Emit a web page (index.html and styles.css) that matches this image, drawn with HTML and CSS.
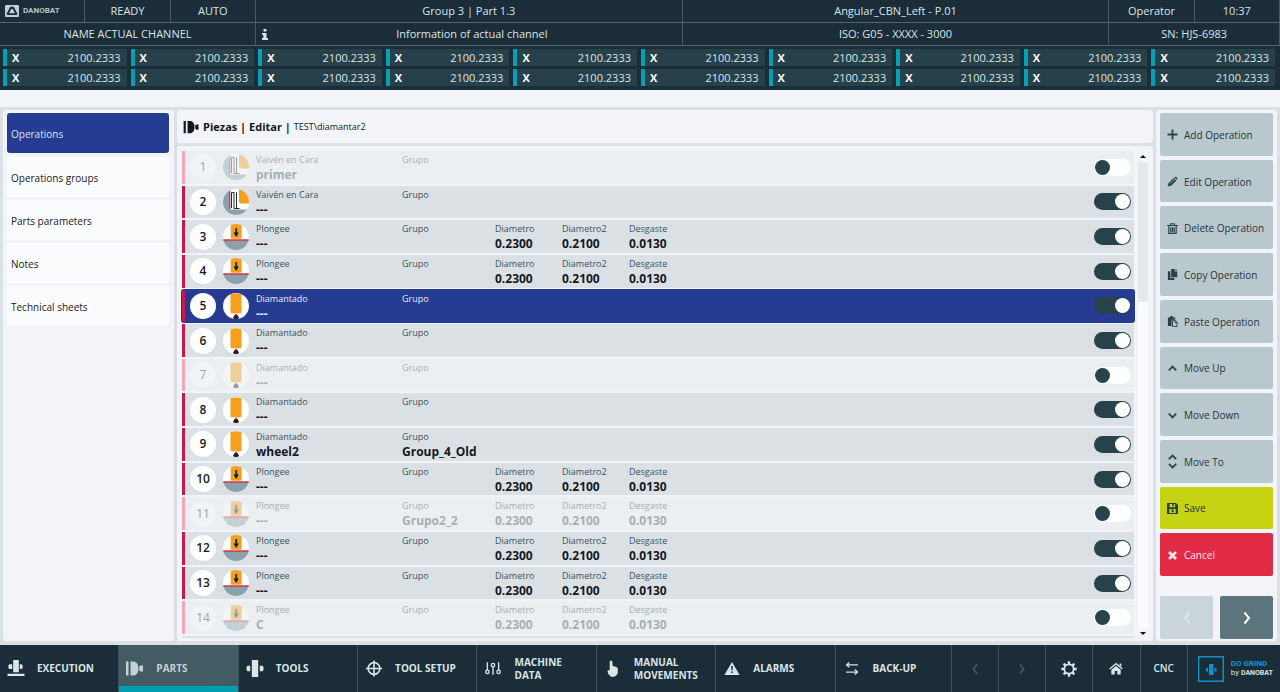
FILE: index.html
```html
<!DOCTYPE html>
<html lang="es">
<head>
<meta charset="utf-8">
<title>Danobat - Piezas | Editar</title>
<link rel="stylesheet" href="styles.css">
</head>
<body>
<svg class="sprite" aria-hidden="true">
  <symbol id="vaiven" viewBox="0 0 26 26">
    <clipPath id="disc"><circle cx="13" cy="13" r="13"/></clipPath>
    <g clip-path="url(#disc)">
      <path fill="#fff" d="M0 0h26v26H0z"/>
      <path fill="#8aa3ab" d="M0 0h6v26H0zM0 20.500h26V26H0z"/>
      <path fill="#f4a01c" d="M16 0h10v14.500h-8.500L16 13z"/>
      <path stroke="#e0264a" stroke-width="1.300" d="M6.700 1v19.500"/>
      <path fill="none" stroke="#1f2a33" stroke-width="1" d="M8.500 19V3.500h2.500V19.500h2.500V3.500M13.500 3.500V19.500h3"/>
    </g>
  </symbol>
  <symbol id="plongee" viewBox="0 0 26 26">
    <g clip-path="url(#disc)">
      <path fill="#fff" d="M0 0h26v16H0z"/>
      <path fill="#8aa3ab" d="M0 16h26v10H0z"/>
      <path fill="#d92f48" d="M0 15.200h26v1.600H0z"/>
      <path fill="#f4a01c" d="M7.700 1.500q0-1.500 2-1.500h7q2 0 2 1.500V14l-1 .7h-9l-1-.7z"/>
      <path fill="#171c20" d="M12.400 4h1.700v4.500h1.800L13.200 13l-2.700-4.500h1.900z"/>
    </g>
  </symbol>
  <symbol id="diamantado" viewBox="0 0 26 26">
    <g clip-path="url(#disc)">
      <path fill="#fff" d="M0 0h26v26H0z"/>
      <path fill="#f4a01c" d="M7.500 1q5.500-1.500 11 0v18.500l-1 .7h-9l-1-.7z"/>
      <path fill="#d92f48" d="M13.100 20.300l2 2.700h-4z"/>
      <path fill="#261b25" d="M11.600 22.300h3l1.400 2.500-1 1.200h-4l-1-1.200z"/>
    </g>
  </symbol>
  <symbol id="wheel" viewBox="0 0 18 16"><path fill="currentColor" d="M0 1h2.500v14H0zM4.500 1H8.500q4 1.500 4 7t-4 7h-4zM13.300 6l1.200-1H17v6h-2.500l-1.200-1z"/></symbol>
  <symbol id="execution" viewBox="0 0 18 18"><path fill="currentColor" d="M6 0h6v13H6zM2 4.500h3v5H2l-1-1v-3zM13 4.500h2l1 1v3l-1 1h-2zM0 14.500h18V17H0z"/></symbol>
  <symbol id="tools" viewBox="0 0 16 16"><path fill="currentColor" d="M5 0h6v16H5zM1 5.500h2.500v5H1l-1-1v-3zM12.500 5.500H15l1 1v3l-1 1h-2.500z"/></symbol>
  <symbol id="target" viewBox="0 0 16 16"><g fill="none" stroke="currentColor" stroke-width="1.500"><circle cx="8" cy="8" r="5.500"/><path d="M8 .5v15M.5 8h15"/></g></symbol>
  <symbol id="sliders" viewBox="0 0 16 14"><g fill="none" stroke="currentColor" stroke-width="1.200"><path d="M3 1.500v7M8 5.500v7M13 1.500v7"/><circle cx="3" cy="10" r="1.500"/><circle cx="8" cy="4" r="1.500"/><circle cx="13" cy="10" r="1.500"/></g></symbol>
  <symbol id="hand" viewBox="0 0 12 17"><path fill="currentColor" d="M2.700 1.500q1.300-2 2.600 0L5.700 6q3.800.2 5.100 2.200v4.600q-.4 3-3.400 4H4Q.2 13.600.5 10.700l2.200-.8z"/></symbol>
  <symbol id="alarm" viewBox="0 0 14 12"><path fill="currentColor" d="M7 0l7 12H0z"/><path fill="#1b2d38" d="M6.200 3.800h1.600l-.3 4h-1zM6.300 8.800h1.400v1.400H6.300z"/></symbol>
  <symbol id="backup" viewBox="0 0 12 12"><path fill="none" stroke="currentColor" stroke-width="1.200" d="M11.500 2.700H1.500M3.500.5L1 2.700l2.500 2.200M.5 9.300h10M8.500 7L11 9.300l-2.500 2.200"/></symbol>
  <symbol id="gear" viewBox="0 0 16 16"><circle cx="8" cy="8" r="4.700" fill="none" stroke="currentColor" stroke-width="1.800"/><path stroke="currentColor" stroke-width="2.400" d="M8 .3v2.700M8 13v2.700M.3 8H3M13 8h2.700M2.600 2.600l1.900 1.900M11.500 11.500l1.900 1.900M13.400 2.600l-1.900 1.900M4.500 11.500l-1.900 1.900"/></symbol>
  <symbol id="home" viewBox="0 0 14 12"><path fill="none" stroke="currentColor" stroke-width="1.300" d="M.6 6.600L7 1.200l6.400 5.400"/><path fill="currentColor" d="M10.500 1h1.800v3.500l-1.800-1.500zM2.300 7.300L7 3.400l4.700 3.900V12H8.300V8.500H5.700V12H2.300z"/></symbol>
  <symbol id="left" viewBox="0 0 8 14"><path fill="none" stroke="currentColor" stroke-width="2" d="M6.500 1.500L2 7l4.500 5.500"/></symbol>
  <symbol id="right" viewBox="0 0 8 14"><path fill="none" stroke="currentColor" stroke-width="2" d="M1.500 1.500L6 7l-4.500 5.500"/></symbol>
  <symbol id="plus" viewBox="0 0 12 12"><path stroke="currentColor" stroke-width="2" d="M6 .5v11M.5 6h11"/></symbol>
  <symbol id="pencil" viewBox="0 0 12 12"><path fill="currentColor" d="M.8 11.500l.8-3.700 5.700-5.500 2.800 2.900-5.600 5.500zM8 1.600q1-1.300 2.200-.6l.9 1q.6 1-.4 2.300z"/><path stroke="#b9c8cd" stroke-width=".7" d="M3 8.500l5-4.700"/></symbol>
  <symbol id="trash" viewBox="0 0 12 12"><path fill="none" stroke="currentColor" stroke-width="1.300" d="M0 2.700h12M4 2.500V.8h4v1.700M2 3v8.300h8V3M4.200 4.500V10M6 4.500V10M7.800 4.500V10"/></symbol>
  <symbol id="copy" viewBox="0 0 12 12"><path fill="currentColor" d="M4.500 0h4v2.800h2.700V9H4.500zM9.300 0l2 2h-2zM1 2.500h2.700v7.300H8V12H1z"/></symbol>
  <symbol id="paste" viewBox="0 0 12 12"><path fill="currentColor" d="M1 1.500h2L4 0h2l1 1.500h2V4H5v7H1z"/><path fill="none" stroke="currentColor" d="M6 5h3.200l1.800 2v4.500H6zM8.800 5v2.300H11"/></symbol>
  <symbol id="up" viewBox="0 0 12 12"><path fill="none" stroke="currentColor" stroke-width="2" d="M2 8L6 4l4 4"/></symbol>
  <symbol id="down" viewBox="0 0 12 12"><path fill="none" stroke="currentColor" stroke-width="2" d="M2 4l4 4 4-4"/></symbol>
  <symbol id="moveto" viewBox="0 0 12 16"><path fill="none" stroke="currentColor" stroke-width="1.900" d="M2 5.500l4-4 4 4M2 10.500l4 4 4-4"/></symbol>
  <symbol id="save" viewBox="0 0 12 12"><path fill="currentColor" fill-rule="evenodd" d="M0 0h9.700L12 2.300V12H0zM2.800 1v3.500h6V1H7.500v2.500H5.800V1zM2.500 6.500V11h7V6.500zM5 7.200h2.200V10H5z"/></symbol>
  <symbol id="cross" viewBox="0 0 12 12"><path stroke="currentColor" stroke-width="2.800" d="M2.200 2.200l7.600 7.600M9.800 2.200L2.200 9.800"/></symbol>
  <symbol id="logo" viewBox="0 0 14 12"><rect width="14" height="12" rx="1" fill="#c2ced4"/><path fill="#1b2d38" fill-rule="evenodd" d="M5.200 1.800h3.600L12.500 9l-1 1h-9l-1-1zM6.300 4L4 8.200h6L7.700 4z"/></symbol>
  <symbol id="info" viewBox="0 0 6 11"><path fill="currentColor" d="M1.500 0h3v2.500h-3zM0 4h4.500v5H6v2H0V9h1.300V5.800H0z"/></symbol>
  <symbol id="grind" viewBox="0 0 26 26"><path fill="none" stroke="#0d93cc" stroke-width="1.400" d="M.7.700h24.600v24.600H.7z"/><path fill="#0d93cc" d="M11 8h4.500v11H11zM8 12h2v3.500H8zM16.500 12h2v3.500h-2z"/></symbol>
</svg>

<header class="top">
  <div class="status">
    <div class="cell brand"><svg class="brand-mark"><use href="#logo"/></svg><b>DANOBAT</b></div>
    <div class="cell">READY</div>
    <div class="cell">AUTO</div>
    <div class="cell">Group 3 | Part 1.3</div>
    <div class="cell">Angular_CBN_Left - P.01</div>
    <div class="cell">Operator</div>
    <div class="cell">10:37</div>
    <div class="cell span3">NAME ACTUAL CHANNEL</div>
    <div class="cell info"><svg class="info-mark"><use href="#info"/></svg><span>Information of actual channel</span></div>
    <div class="cell">ISO: G05 - XXXX - 3000</div>
    <div class="cell span2">SN: HJS-6983</div>
  </div>
  <div class="axes" id="axes"></div>
</header>

<main class="main">
  <nav class="panel side">
    <button class="side-item active">Operations</button>
    <button class="side-item">Operations groups</button>
    <button class="side-item">Parts parameters</button>
    <button class="side-item">Notes</button>
    <button class="side-item">Technical sheets</button>
  </nav>

  <section class="center">
    <h1 class="panel title"><svg class="title-icon"><use href="#wheel"/></svg>Piezas | Editar | <span class="path">TEST\diamantar2</span></h1>
    <div class="panel list">
      <div class="rows" id="rows"></div>
      <div class="scroll"><i class="arrow-up"></i><div class="track"><div class="thumb"></div></div><i class="arrow-down"></i></div>
    </div>
  </section>

  <aside class="panel actions">
    <div class="action-list">
      <button class="action"><svg><use href="#plus"/></svg>Add Operation</button>
      <button class="action"><svg><use href="#pencil"/></svg>Edit Operation</button>
      <button class="action"><svg><use href="#trash"/></svg>Delete Operation</button>
      <button class="action"><svg><use href="#copy"/></svg>Copy Operation</button>
      <button class="action"><svg><use href="#paste"/></svg>Paste Operation</button>
      <button class="action"><svg><use href="#up"/></svg>Move Up</button>
      <button class="action"><svg><use href="#down"/></svg>Move Down</button>
      <button class="action"><svg class="tall"><use href="#moveto"/></svg>Move To</button>
      <button class="action save"><svg><use href="#save"/></svg>Save</button>
      <button class="action cancel"><svg><use href="#cross"/></svg>Cancel</button>
    </div>
    <div class="pager">
      <button class="page" disabled aria-label="Previous"><svg><use href="#left"/></svg></button>
      <button class="page next" aria-label="Next"><svg><use href="#right"/></svg></button>
    </div>
  </aside>
</main>

<footer class="tabs">
  <button class="tab"><svg><use href="#execution"/></svg><span>EXECUTION</span></button>
  <button class="tab active"><svg><use href="#wheel"/></svg><span>PARTS</span></button>
  <button class="tab"><svg><use href="#tools"/></svg><span>TOOLS</span></button>
  <button class="tab"><svg><use href="#target"/></svg><span>TOOL SETUP</span></button>
  <button class="tab"><svg><use href="#sliders"/></svg><span>MACHINE<br>DATA</span></button>
  <button class="tab"><svg><use href="#hand"/></svg><span>MANUAL<br>MOVEMENTS</span></button>
  <button class="tab"><svg class="mid"><use href="#alarm"/></svg><span>ALARMS</span></button>
  <button class="tab"><svg class="mid"><use href="#backup"/></svg><span>BACK-UP</span></button>
  <button class="tab small" disabled aria-label="Previous"><svg><use href="#left"/></svg></button>
  <button class="tab small" disabled aria-label="Next"><svg><use href="#right"/></svg></button>
  <button class="tab small" aria-label="Settings"><svg class="big"><use href="#gear"/></svg></button>
  <button class="tab small" aria-label="Home"><svg class="mid"><use href="#home"/></svg></button>
  <button class="tab small cnc">CNC</button>
  <div class="grind"><svg><use href="#grind"/></svg><div><b>DO GRIND</b><small>by <strong>DANOBAT</strong></small></div></div>
</footer>
<script src="app.js"></script>
</body>
</html>
```
FILE: styles.css
```css
* { box-sizing: border-box; }
body {
  margin: 0;
  min-height: 100vh;
  display: flex;
  flex-direction: column;
  background: #dae0e4;
  color: #1c2022;
  font: 11px/16px "Open Sans", "Noto Sans", sans-serif;
}
button { font: inherit; color: inherit; border: 0; margin: 0; padding: 0; text-align: left; }
.sprite { position: absolute; width: 0; height: 0; }

.top { background: #1b2d38; color: #d9e5e9; }
.status { display: grid; grid-template-columns: 1fr 1fr 1fr 5fr 5fr 1fr 1fr; grid-auto-rows: 23px; }
.cell {
  display: flex; align-items: center; justify-content: center;
  border-right: 1px solid #4b5a63; border-bottom: 1px solid #566670;
  white-space: nowrap;
}
.span3 { grid-column: span 3; }
.span2 { grid-column: span 2; }
.brand { justify-content: flex-start; padding-left: 5px; gap: 4px; color: #b5c4cb; }
.brand b { font-family: Roboto, sans-serif; font-size: 8px; }
.brand-mark { width: 14px; height: 12px; }
.info { padding-left: 6px; }
.info span { flex: 1; text-align: center; padding-right: 6px; }
.info-mark { width: 6px; height: 11px; }
.axes { display: grid; grid-template-columns: repeat(10, 1fr); gap: 3px 4px; padding: 3px 5px 4px 3px; }
.axis {
  display: flex; justify-content: space-between; align-items: center;
  height: 17px; padding: 0 6px 0 5px;
  background: #27414a; border-left: 4px solid #079fb2;
}
.axis b { color: #fff; }

.main { flex: 1; display: flex; gap: 3px; margin-top: 17px; padding: 3px 3px 4px; position: relative; }
.main::before { content: ""; position: absolute; left: 0; right: 0; top: -17px; height: 17px; background: #f1f4f9; }
.panel { background: #f2f4f9; border-radius: 3px; }
.side { width: 171px; padding: 3px 5px 3px 4px; display: flex; flex-direction: column; gap: 3px; }
.side-item { height: 40px; padding: 1px 0 0 4px; font-size: 10px; background: #fbfcfe; }
.side-item.active { background: #263c92; color: #dfe5f5; border-radius: 3px; margin-bottom: 1px; }

.center { flex: 1; display: flex; flex-direction: column; gap: 3px; }
.title { height: 33px; margin: 0; padding-left: 6px; display: flex; align-items: center; gap: 3px; font-size: 11px; font-weight: 700; color: #101820; }
.title-icon { width: 17px; height: 14px; }
.path { font-size: 9px; font-weight: 400; }
.list { flex: 1; display: flex; gap: 4px; padding: 5px 5px 3px 5px; }
.rows { flex: 1; display: grid; grid-auto-rows: 1fr; gap: 2px; padding-bottom: 2px; border-bottom: 2px solid #dde2e6; }
.row {
  display: grid; grid-template-columns: 26px 26px 139px 86px 60px 60px 1fr auto;
  column-gap: 7px; align-items: center;
  padding: 0 3px 0 5px;
  border-left: 3px solid #c9184e;
  background: #dbe0e5;
}
.row.selected { background: #263c92; border-radius: 2px; box-shadow: 0 0 0 1px #263c92; }
.num {
  width: 26px; height: 26px; border-radius: 50%; background: #fff;
  display: flex; align-items: center; justify-content: center;
  font-size: 12px; font-weight: 600; color: #141a1e;
}
.op { width: 26px; height: 26px; }
.field { font-size: 9px; line-height: 14px; color: #37545c; white-space: nowrap; align-self: start; padding-top: 2px; }
.field b { display: block; height: 15px; font-size: 12px; line-height: 15px; color: #12191d; }
.selected .field, .selected .field b { color: #e6ebf7; }
.row.off { background: #ebeff2; border-left-color: #f1a6b9; }
.off .field, .off .field b { color: #a5afb4; }
.off .num { background: #f1f4f6; color: #9aa3a7; font-weight: 400; }
.off .op { opacity: 0.4; }
.switch {
  appearance: none; display: block; grid-column: 8;
  width: 37px; height: 17px; margin: 0; padding: 1px; border-radius: 9px; background: #fff;
}
.switch::before { content: ""; display: block; width: 15px; height: 15px; border-radius: 50%; background: #27424b; }
.switch:checked { background: #27424b; }
.switch:checked::before { background: #fff; margin-left: auto; }
.scroll { width: 10px; display: flex; flex-direction: column; align-items: center; gap: 4px; padding: 4px 0 3px; }
.arrow-up, .arrow-down { border: 3px solid transparent; }
.arrow-up { border-top: 0; border-bottom-color: #111; }
.arrow-down { border-bottom: 0; border-top-color: #111; }
.track { flex: 1; width: 10px; background: #fafbfe; }
.thumb { height: 30%; background: #e5e9ec; border-radius: 2px; }

.actions { width: 121px; padding: 3px 4px 2px; display: flex; flex-direction: column; gap: 20px; }
.action-list { flex: 1; display: grid; grid-auto-rows: 1fr; gap: 4px; }
.action { display: flex; align-items: center; gap: 6px; padding: 1px 0 0 7px; font-size: 10px; background: #b9c8cd; border-radius: 2px; color: #27343a; white-space: nowrap; }
.action svg { width: 11px; height: 11px; color: #27424b; }
.action svg.tall { height: 15px; }
.save { background: #c5d312; }
.action.cancel, .cancel svg { color: #ffe6ea; }
.cancel { background: #e12a45; }
.pager { display: grid; grid-template-columns: 1fr 1fr; gap: 7px; }
.page { height: 43px; display: flex; align-items: center; justify-content: center; background: #c9d5d8; color: #e0e8ea; border-radius: 2px; }
.page svg { width: 8px; height: 14px; }
.next { background: #5c757c; color: #fff; }

.tabs {
  display: grid; grid-template-columns: repeat(7, 119fr) 116fr repeat(5, 47fr) 92fr;
  height: 47px; background: #1b2d38; color: #dbe4e7;
}
.tab { display: flex; align-items: center; gap: 12px; padding-left: 7px; background: none; border-right: 1px solid #42535d; font-size: 10px; line-height: 13px; font-weight: 700; }
.tab svg { width: 18px; height: 17px; }
.tab svg.mid { height: 13px; }
.tab.active { background: #435b62; box-shadow: inset 0 -6px 0 #019eb1; color: #c5d0d3; }
.tab.small { justify-content: center; padding: 0; }
.small svg { width: 14px; height: 12px; }
.tab svg.big { width: 16px; height: 16px; }
.tab:disabled { color: #465761; }
.tab.cnc { font-weight: 600; }
.grind { display: flex; align-items: center; gap: 7px; padding-left: 10px; font-family: Roboto, sans-serif; white-space: nowrap; }
.grind svg { width: 26px; height: 26px; }
.grind b, .grind small { display: block; font-size: 8px; line-height: 9px; }
.grind b { color: #0d93cc; }
.grind strong { font-size: 7px; }
```
FILE: app.js
```js
document.getElementById('axes').innerHTML =
  '<div class="axis"><b>X</b><span>2100.2333</span></div>'.repeat(20);

const V = 'vaiven', P = 'plongee', D = 'diamantado';
const names = { vaiven: 'Vaivén en Cara', plongee: 'Plongee', diamantado: 'Diamantado' };
// [type, name, group, enabled]
const operations = [
  [V, 'primer', '', false], [V, '---', '', true], [P, '---', '', true], [P, '---', '', true],
  [D, '---', '', true], [D, '---', '', true], [D, '---', '', false], [D, '---', '', true],
  [D, 'wheel2', 'Group_4_Old', true], [P, '---', '', true], [P, '---', 'Grupo2_2', false],
  [P, '---', '', true], [P, '---', '', true], [P, 'C', '', false]
];
const field = (label, value) => `<div class="field">${label}<b>${value}</b></div>`;

document.getElementById('rows').innerHTML = operations.map(([type, name, group, on], i) => `
  <div class="row${on ? '' : ' off'}${i === 4 ? ' selected' : ''}">
    <span class="num">${i + 1}</span>
    <svg class="op"><use href="#${type}"/></svg>
    ${field(names[type], name)}${field('Grupo', group)}
    ${type === P ? field('Diametro', '0.2300') + field('Diametro2', '0.2100') + field('Desgaste', '0.0130') : ''}
    <input class="switch" type="checkbox" aria-label="Operation ${i + 1}"${on ? ' checked' : ''}>
  </div>`).join('');
```
